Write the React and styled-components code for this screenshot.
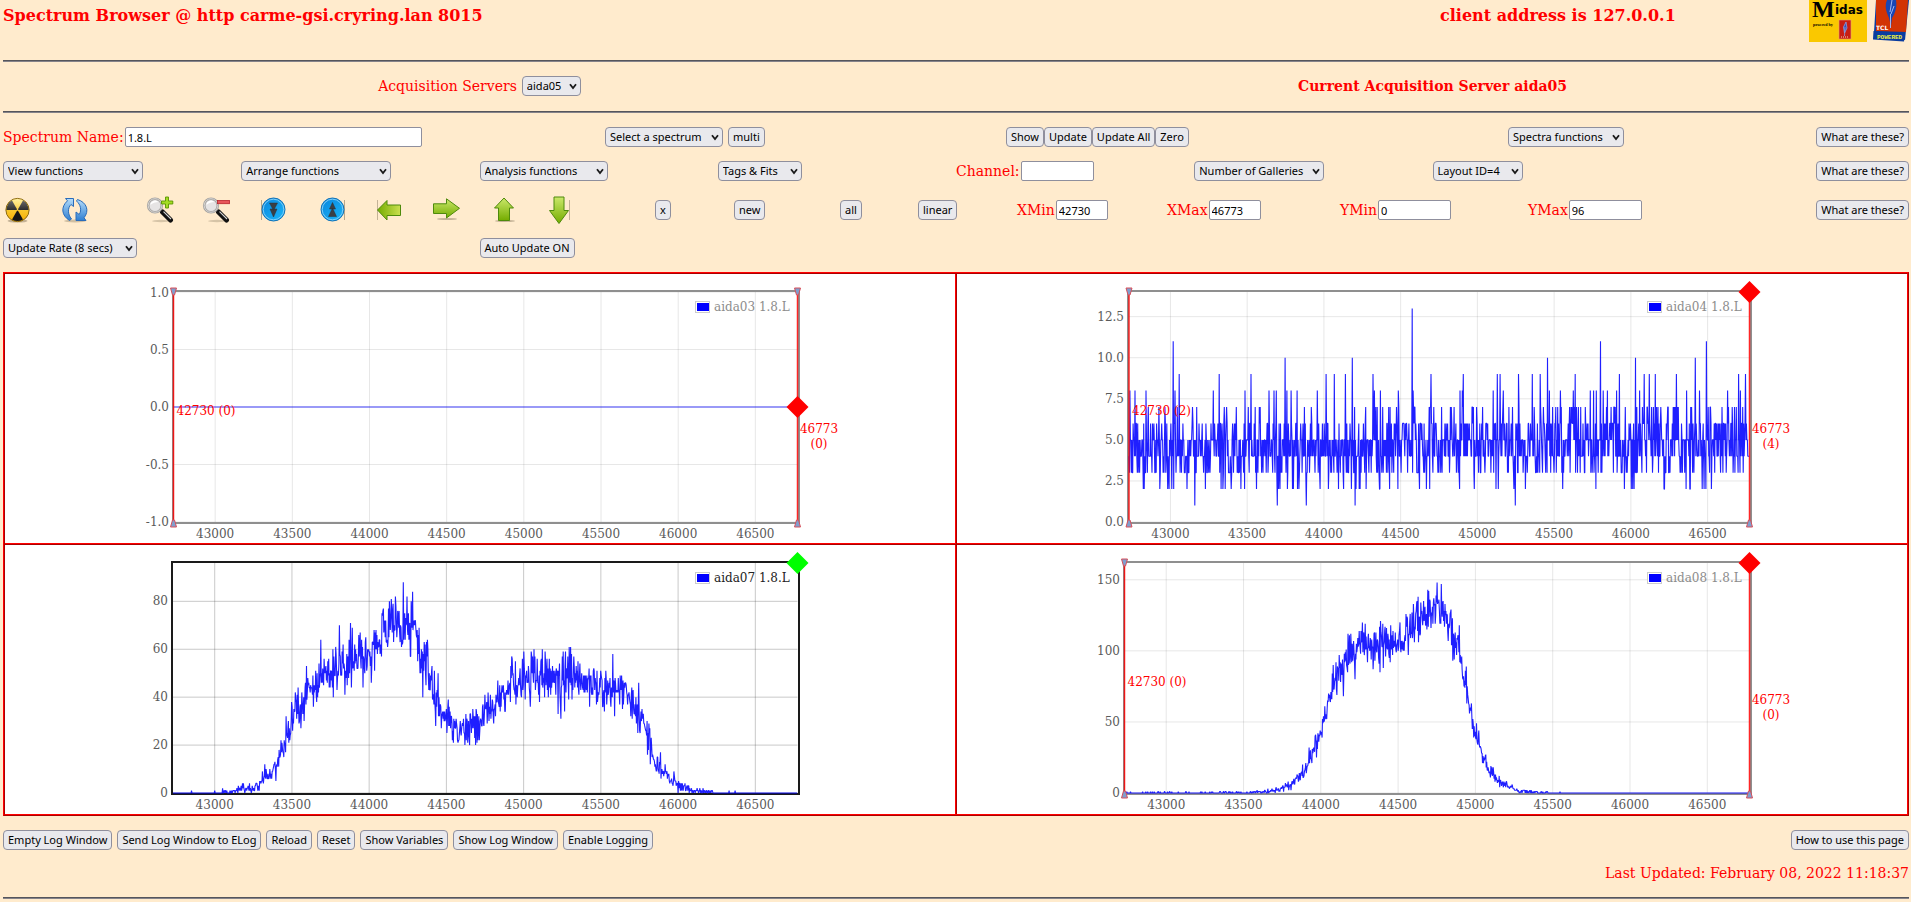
import React from "react";
import styled, { createGlobalStyle } from "styled-components";

const SERIF = '"DejaVu Serif", serif';
const UI = '"Noto Sans", "Open Sans", sans-serif';

const GlobalStyle = createGlobalStyle`
  *, *::before, *::after { box-sizing: border-box; }
  body {
    margin: 0 2px 0 3px;
    background: #ffebcd;
    color: #ff0000;
    font: 14px/16px ${SERIF};
  }
`;

/* ---------- layout parts ---------- */

const Page = styled.main`
  display: flex;
  flex-direction: column;
`;

const Rule = styled.hr`
  width: 100%;
  height: 2px;
  margin: 0;
  border: 0;
  border-top: 1px solid #55555b;
  background: #85838a;
`;

const Header = styled.header`
  display: grid;
  grid-template-columns: 1437fr 369fr 100fr;
  height: 60px;
`;

const Title = styled.h1`
  margin: 6px 0 0;
  font-size: 16px;
  line-height: 19px;
  font-weight: bold;
  white-space: nowrap;
`;

const Logos = styled.div`
  display: flex;
  align-items: flex-start;
  gap: 6px;
`;

const Servers = styled.section`
  display: grid;
  grid-template-columns: 1fr 1fr;
  align-items: center;
  justify-items: center;
  padding: 14px 0 15px;
`;

const CurrentServer = styled.h2`
  margin: 0;
  font-size: 14px;
  font-weight: bold;
`;

const Controls = styled.section`
  display: flex;
  flex-direction: column;
  gap: 14px;
  padding: 14px 0;
`;

const Row = styled.div`
  display: grid;
  grid-template-columns: ${(p) => p.$cols};
  align-items: center;
  padding-top: ${(p) => (p.$tall ? "1px" : "0")};
`;

const Group = styled.div`
  display: flex;
  align-items: center;
  gap: ${(p) => p.$gap || 0}px;
  justify-content: ${(p) => (p.$end ? "flex-end" : "flex-start")};
  white-space: nowrap;
`;

const Caption = styled.label`
  white-space: nowrap;
`;

/* ---------- controls ---------- */

const Button = styled.button`
  height: 20px;
  padding: 0 4px;
  border: 1px solid #8f8f9d;
  border-radius: 4px;
  background: #e9e9ed;
  color: #000;
  font: 11px/18px ${UI};
  white-space: nowrap;
  flex: none;
`;

const Input = styled.input`
  width: ${(p) => p.$w}px;
  height: 20px;
  padding: 0 2px;
  border: 1px solid #8f8f9d;
  border-radius: 2px;
  background: #fff;
  color: #000;
  font: 11px/18px ${UI};
`;

const SelectWrap = styled.span`
  position: relative;
  display: inline-flex;
  flex: none;
  justify-self: start;
`;

const Select = styled.select`
  appearance: none;
  width: ${(p) => p.$w}px;
  height: 20px;
  padding: 0 4px;
  border: 1px solid #8f8f9d;
  border-radius: 4px;
  background: #e9e9ed;
  color: #000;
  font: 11px/18px ${UI};
`;

const Chevron = styled.svg`
  position: absolute;
  right: 4px;
  top: 7px;
  pointer-events: none;
`;

const IconButton = styled.button`
  display: block;
  width: 28px;
  height: 28px;
  padding: 0;
  border: 0;
  background: none;
`;

function Dropdown({ id, label, w }) {
  return (
    <SelectWrap>
      <Select id={id} $w={w} aria-label={id ? undefined : label} defaultValue={label}>
        <option>{label}</option>
      </Select>
      <Chevron width="8" height="7" viewBox="0 0 8 7" aria-hidden="true">
        <path d="M1 1.2 L4 5 L7 1.2" fill="none" stroke="#1a1a1a" strokeWidth="1.8" />
      </Chevron>
    </SelectWrap>
  );
}

function Field({ id, label, value, w }) {
  return (
    <Group $gap={1}>
      <Caption htmlFor={id}>{label}</Caption>
      <Input id={id} $w={w} defaultValue={value} />
    </Group>
  );
}

const Help = () => (
  <Group $end>
    <Button>What are these?</Button>
  </Group>
);

/* ---------- icons ---------- */

const wedge = (a) => {
  const p = (r, d) => {
    const t = (d * Math.PI) / 180;
    return `${14.5 + r * Math.cos(t)} ${14 - r * Math.sin(t)}`;
  };
  return `M${p(1, a)} L${p(11, a)} A11 11 0 0 0 ${p(11, a + 60)} L${p(1, a + 60)}Z`;
};

const Radiation = () => (
  <svg width="28" height="28" viewBox="0 0 28 28">
    <defs>
      <linearGradient id="radFill" x1="0" y1="0" x2="0" y2="1">
        <stop offset="0" stopColor="#ffe45c" />
        <stop offset="1" stopColor="#f5ad00" />
      </linearGradient>
      <linearGradient id="radShine" x1="0" y1="0" x2="0" y2="1">
        <stop offset="0" stopColor="#fff" stopOpacity=".4" />
        <stop offset="1" stopColor="#fff" stopOpacity=".1" />
      </linearGradient>
    </defs>
    <ellipse cx="14.5" cy="25" rx="10" ry="1.6" fill="#8a7a60" opacity=".5" />
    <circle cx="14.5" cy="14" r="11.6" fill="url(#radFill)" stroke="#8c6a10" strokeWidth="1" />
    {[0, 120, 240].map((a) => (
      <path key={a} d={wedge(a)} fill="#161616" />
    ))}
    <path d="M3.5 14 A11 11 0 0 1 25.5 14Z" fill="url(#radShine)" />
  </svg>
);

const Refresh = () => (
  <svg width="28" height="28" viewBox="0 0 28 28">
    <defs>
      <linearGradient id="refFill" x1="0" y1="0" x2="0" y2="1">
        <stop offset="0" stopColor="#b4dcfa" />
        <stop offset="1" stopColor="#2f7fd2" />
      </linearGradient>
    </defs>
    <ellipse cx="15" cy="25" rx="11" ry="1.4" fill="#8a7a60" opacity=".4" />
    <path
      d="M5.5 2.5 H13.5 V10.5 L11 8.5 C7.5 12 7.5 18 11.5 23 L9.5 24.5 C1.5 19.5 0.5 11 7.5 4.8Z"
      fill="url(#refFill)" stroke="#2a6cba" strokeWidth="1" strokeLinejoin="round"
    />
    <path
      d="M17.5 3.5 C27 6.5 29.5 15 24 21.8 L26 24.5 H16 V16 L19.2 18.5 C22 14 20.5 8.5 16.5 5Z"
      fill="url(#refFill)" stroke="#2a6cba" strokeWidth="1" strokeLinejoin="round"
    />
  </svg>
);

const Magnifier = ({ minus }) => (
  <svg width="28" height="28" viewBox="0 0 28 28">
    <ellipse cx="15" cy="25" rx="9" ry="1.2" fill="#8a7a60" opacity=".35" />
    <path d="M16.5 16 L24.5 24" stroke="#111" strokeWidth="5" strokeLinecap="round" />
    <path d="M17.5 15.6 L25 23" stroke="#d8d8d8" strokeWidth="1.1" />
    <circle cx="9" cy="9.5" r="6.8" fill="#e6e4e4" stroke="#a6a4a2" strokeWidth="2.6" />
    <circle cx="9" cy="9.5" r="6.8" fill="none" stroke="#d5d3d0" strokeWidth="1" />
    <path d="M4.5 9 A4.6 4.6 0 0 1 12.5 6 C10 6 6 7 4.5 9Z" fill="#fff" />
    {minus ? (
      <rect x="15.5" y="4.5" width="12" height="3.2" fill="#e8565a" stroke="#b8242c" strokeWidth=".8" />
    ) : (
      <path
        d="M19.5 1 H22.5 V5 H26.8 V8 H22.5 V12 H19.5 V8 H15.5 V5 H19.5Z"
        fill="#a4dc24" stroke="#589400" strokeWidth=".9"
      />
    )}
  </svg>
);

const BlueDisc = ({ up }) => (
  <svg width="28" height="28" viewBox="0 0 28 28">
    <defs>
      <linearGradient id="discFill" x1="0" y1="0" x2="1" y2="1">
        <stop offset="0" stopColor="#0a84dc" />
        <stop offset="1" stopColor="#19b8fa" />
      </linearGradient>
    </defs>
    <path d={up ? "M26.5 4 V24" : "M2.5 4 V24"} stroke="#8a7a60" strokeWidth="1" opacity=".6" />
    <circle cx="14.5" cy="13.5" r="11.5" fill="url(#discFill)" stroke="#1672b4" strokeWidth="1" />
    <circle cx="14.5" cy="13.5" r="10.3" fill="none" stroke="#8ad4fa" strokeWidth=".9" />
    <path
      d={
        up
          ? "M14.5 6.5 L17.5 13 H11.5Z M14.5 12 L18.5 20.5 H10.5Z"
          : "M10.5 7 H18.5 L14.5 14.5Z M11 13 H18 L14.5 21Z"
      }
      fill="#3a3f44" stroke="#2b3238" strokeWidth=".5"
    />
  </svg>
);

const ARROWS = {
  left: "M2.5 14 L12 4.5 V9 H25.5 V19.5 H12 V24Z",
  right: "M1.5 7.8 H14.5 V2.8 L27.5 12.3 L14.5 22 V17.5 H1.5Z",
  up: "M14 2 L23.5 12 H19.5 V24.5 H8.5 V12 H4.5Z",
  down: "M9 1 H19 V14.5 H23.5 L14 27.5 L4.5 14.5 H9Z",
};

const Arrow = ({ dir }) => (
  <svg width="28" height="28" viewBox="0 0 28 28">
    <defs>
      <linearGradient id={`arrow-${dir}`} x1="0" y1="0" x2={dir === "left" ? "1" : "0"} y2={dir === "left" ? "0" : "1"}>
        <stop offset="0" stopColor={dir === "left" ? "#74ac00" : "#cbe86a"} />
        <stop offset="1" stopColor={dir === "left" ? "#cbe050" : "#74ac00"} />
      </linearGradient>
    </defs>
    {(dir === "left" || dir === "down") && (
      <path d={dir === "left" ? "M2.5 4 V24" : "M24.5 4 V24"} stroke="#8a7a60" strokeWidth="1" opacity=".5" />
    )}
    {(dir === "right" || dir === "up") && (
      <ellipse cx="15" cy={dir === "up" ? 25 : 23} rx="10" ry="1" fill="#8a7a60" opacity=".5" />
    )}
    <path d={ARROWS[dir]} fill={`url(#arrow-${dir})`} stroke="#4e8a0c" strokeWidth="1" strokeLinejoin="round" />
  </svg>
);

const ICONS = [
  ["Zero all", <Radiation />],
  ["Refresh", <Refresh />],
  ["Zoom in", <Magnifier />],
  ["Zoom out", <Magnifier minus />],
  ["Scale down", <BlueDisc />],
  ["Scale up", <BlueDisc up />],
  ["Left", <Arrow dir="left" />],
  ["Right", <Arrow dir="right" />],
  ["Up", <Arrow dir="up" />],
  ["Down", <Arrow dir="down" />],
];

const MidasLogo = () => (
  <svg width="58" height="42" viewBox="0 0 58 42" role="img" aria-label="Midas">
    <rect width="58" height="42" fill="#fac800" />
    <text x="3" y="17" fontFamily="Liberation Serif, serif" fontWeight="bold" fontSize="24" fill="#000">M</text>
    <text x="26" y="14" fontFamily="DejaVu Sans, sans-serif" fontWeight="bold" fontSize="12" fill="#000">idas</text>
    <text x="4" y="26" fontFamily="Liberation Serif, serif" fontWeight="bold" fontSize="4" fill="#000">powered by</text>
    <rect x="30" y="20" width="12" height="19" fill="#c81e14" stroke="#e8a070" strokeWidth=".6" />
    <path d="M37 22 L34.5 27 L35.5 33 L38 28Z M36 27 L35.5 36" fill="#3c50b4" stroke="#8ca0e0" strokeWidth=".8" />
    <path d="M32 37 H40" stroke="#f0d8c0" strokeWidth="1" strokeDasharray="1 1" />
  </svg>
);

const TclLogo = () => (
  <svg width="36" height="42" viewBox="0 0 36 42" role="img" aria-label="Tcl Powered">
    <path d="M3 0 L1 32 L32 40 L36 0Z" fill="#0a3ca0" />
    <path d="M3 0 H35 L33 32 L3 31Z" fill="#d23404" />
    <path d="M0.5 31 L32 33 L31 41.5 L0 39.5Z" fill="#0a3ca0" />
    <path d="M14 0 C11 7 14 13 16 18 L18 26 L19 18 C23 12 24 6 23 0Z" fill="#1846b4" />
    <path d="M19 0 L17 12 M21 6 L18 14 M17.5 14 V28" stroke="#a0b8f0" strokeWidth="1" fill="none" />
    <text x="3" y="30" fontFamily="DejaVu Sans, sans-serif" fontWeight="bold" fontSize="6" fill="#fff">TCL</text>
    <text x="4" y="39" fontFamily="Liberation Mono, monospace" fontWeight="bold" fontSize="6" fill="#f0f03c">POWERED</text>
  </svg>
);

/* ---------- spectra ---------- */

const FROM = 42730;
const TO = 46773;
const TOP = 18;
const BOTTOM = 248;
const RIGHT = 792.5;

function random(seed) {
  let s = seed;
  return () => {
    s = (s * 1664525 + 1013904223) % 4294967296;
    return s / 4294967296;
  };
}

const gauss = (rnd) =>
  Math.sqrt(-2 * Math.log(rnd() + 1e-9)) * Math.cos(2 * Math.PI * rnd());

function meanAt(env, ch) {
  if (ch <= env[0][0]) return env[0][1];
  for (let i = 1; i < env.length; i++) {
    if (ch <= env[i][0]) {
      const [a, va] = env[i - 1];
      const [b, vb] = env[i];
      return va + ((vb - va) * (ch - a)) / (b - a);
    }
  }
  return env[env.length - 1][1];
}

function buildSpectrum({ seed, env, sd, min = 0, max = Infinity, peaks = [], step = 3 }) {
  const rnd = random(seed);
  const out = [];
  for (let ch = FROM; ch <= TO; ch += step) {
    const m = meanAt(env, ch);
    out.push([ch, Math.min(max, Math.max(min, Math.round(m + gauss(rnd) * sd(m))))]);
  }
  peaks.forEach(([ch, v]) => {
    const i = Math.round((ch - FROM) / step);
    if (out[i]) out[i][1] = v;
  });
  return out;
}

/* peaks of the flat background spectrum, as distance in pixels from the left edge */
const at = (px) => FROM + (px * (TO - FROM)) / 620;
const NOISE_PEAKS = [
  ...[[44, 11], [50, 9], [90, 9], [122, 9], [156, 10], [197, 9], [205, 9], [216, 9], [223, 10],
    [244, 9], [283, 13], [302, 9], [334, 9], [368, 9], [371, 9], [389, 9], [403, 9], [411, 9],
    [418, 10], [446, 9], [471, 11], [490, 9], [506, 10], [515, 9], [520, 9], [526, 9], [547, 9],
    [566, 10], [577, 11], [609, 9], [616, 9], [66, 1], [148, 1], [177, 1], [226, 1], [386, 1], [557, 1]],
  ...[1, 6, 17, 46, 84, 116, 140, 145, 147, 158, 162, 168, 188, 245, 251, 269, 284, 331, 333, 364,
    374, 420, 431, 444, 461, 464, 467, 474, 478, 487, 510, 557, 570, 598, 611].map((x) => [x, 8]),
].map(([px, v]) => [at(px), v]);

const noise = buildSpectrum({
  seed: 77,
  step: 3,
  env: [[42730, 4.3], [44200, 4.3], [44700, 4.7], [46773, 4.8]],
  sd: () => 1.3,
  min: 2,
  max: 7,
  peaks: NOISE_PEAKS,
});

const doublePeak = buildSpectrum({
  seed: 421,
  env: [[42730, 0], [43000, 0], [43100, 0.3], [43200, 1.5], [43280, 3], [43350, 7], [43400, 12],
    [43450, 20], [43500, 31], [43550, 37], [43600, 42], [43650, 45], [43700, 50], [43800, 52],
    [43900, 57], [44000, 58], [44050, 63], [44100, 67], [44150, 71], [44250, 72], [44290, 71],
    [44320, 62], [44370, 53], [44420, 41], [44480, 33], [44540, 29], [44600, 26], [44650, 28],
    [44700, 30], [44800, 36], [44850, 40], [44900, 45], [44950, 47], [45000, 49], [45100, 48],
    [45200, 47], [45300, 46], [45400, 46], [45500, 44], [45600, 45], [45650, 44], [45700, 38],
    [45750, 32], [45800, 22], [45850, 15], [45900, 9], [45950, 6], [46000, 3.5], [46050, 2],
    [46100, 1.2], [46200, 0.4], [46260, 0], [46773, 0]],
  sd: (m) => 0.74 * Math.sqrt(m),
  peaks: [[44221, 88], [44281, 84], [44142, 81], [44130, 80], [43808, 70], [43688, 64], [43878, 71],
    [44376, 64], [45304, 61], [45576, 58], [45270, 59], [45120, 60], [45066, 60], [45000, 59],
    [44926, 56], [45240, 31], [45588, 32], [43844, 41], [44650, 20], [44690, 20], [43324, 12],
    [43594, 53], [42850, 1], [43000, 1], [43050, 2], [46330, 1], [46370, 1]],
});

const singlePeak = buildSpectrum({
  seed: 913,
  env: [[42730, 0.15], [43500, 0.2], [43650, 1], [43750, 3], [43800, 6], [43850, 10], [43900, 17],
    [43950, 28], [44000, 44], [44050, 62], [44100, 80], [44150, 92], [44200, 99], [44250, 102],
    [44350, 103], [44400, 105], [44500, 107], [44550, 112], [44600, 117], [44650, 120],
    [44700, 127], [44750, 131], [44800, 127], [44850, 115], [44880, 104], [44920, 85], [44960, 62],
    [45000, 40], [45050, 25], [45100, 14], [45150, 8], [45200, 4.5], [45250, 2.5], [45300, 1.5],
    [45400, 0.4], [45500, 0.15], [45600, 0], [46773, 0]],
  sd: (m) => 0.74 * Math.sqrt(m),
  peaks: [[44752, 148], [44780, 147], [44697, 142], [44895, 118], [44383, 85], [44288, 119],
    [44386, 121], [44220, 80], [44184, 111], [44620, 134], [44600, 133]],
});

const X_TICKS = [43000, 43500, 44000, 44500, 45000, 45500, 46000, 46500];

const CHARTS = [
  { name: "aida03 1.8.L", x0: 168.5, min: -1, max: 1, ticks: ["1.0", "0.5", "0.0", "-0.5", "-1.0"],
    data: [[FROM, 0], [TO, 0]], flat: true, left: "42730 (0)", right: "(0)", status: ["red", 0] },
  { name: "aida04 1.8.L", x0: 172, min: 0, max: 14, ticks: ["12.5", "10.0", "7.5", "5.0", "2.5", "0.0"],
    data: noise, left: "42730 (2)", right: "(4)", status: ["red", 14] },
  { name: "aida07 1.8.L", x0: 168, min: 0, max: 96, ticks: ["80", "60", "40", "20", "0"],
    data: doublePeak, active: true, status: ["#00ff00", 96] },
  { name: "aida08 1.8.L", x0: 167.5, min: 0, max: 161.8, ticks: ["150", "100", "50", "0"],
    data: singlePeak, left: "42730 (0)", right: "(0)", status: ["red", 161.8] },
];

const Gallery = styled.section`
  display: grid;
  grid-template-columns: 952fr 950fr;
  border: 2px ridge #ff0000;
  background: #fff;
`;

const Cell = styled.figure`
  margin: 0;
  border: 0 ridge #ff0000;
  border-right-width: ${(p) => (p.$right ? "2px" : "0")};
  border-bottom-width: ${(p) => (p.$bottom ? "2px" : "0")};
`;

const Plot = styled.svg`
  display: block;
  width: 100%;
  height: auto;
  font: 12px ${SERIF};
`;

function Chart({ spec }) {
  const { x0, min, max, active } = spec;
  const px = (ch) => x0 + ((ch - FROM) * (RIGHT - x0)) / (TO - FROM);
  const py = (v) => BOTTOM - ((v - min) * (BOTTOM - TOP)) / (max - min);
  const points = spec.data.map(([c, v]) => `${px(c).toFixed(1)},${py(v).toFixed(1)}`).join(" ");
  const frame = active ? "#1a1a1a" : "#8f8f8f";
  const grid = active ? "rgba(60,60,60,.28)" : "rgba(60,60,60,.12)";
  const frameLeft = Math.floor(x0 - 0.5);
  const [colour, level] = spec.status;
  const marker = { fill: "#7f9fcf", stroke: "#d8505a", strokeWidth: 1 };
  return (
    <Plot viewBox="0 0 950 269" role="img" aria-label={spec.name}>
      {X_TICKS.map((t) => (
        <g key={t}>
          <line x1={px(t)} x2={px(t)} y1={TOP} y2={BOTTOM} stroke={grid} />
          <text x={px(t)} y="264" textAnchor="middle" fill="#5a5a5a">{t}</text>
        </g>
      ))}
      {spec.ticks.map((t) => (
        <g key={t}>
          <line x1={x0} x2={RIGHT} y1={py(+t)} y2={py(+t)} stroke={grid} />
          <text x={frameLeft - 4} y={Math.max(23, py(+t) + 4)} textAnchor="end" fill="#5a5a5a">{t}</text>
        </g>
      ))}
      <rect x={frameLeft} y="17" width={794 - frameLeft} height="232" fill="none" stroke={frame} strokeWidth="2" />
      <polyline
        points={points} fill="none" stroke="#0000ff" strokeLinejoin="bevel"
        strokeOpacity={spec.flat ? 0.37 : 0.88} strokeWidth={spec.flat ? 2 : 1.1}
      />
      <rect x="690.5" y="27.5" width="14" height="11" fill="#fff" stroke="#ccc" />
      <rect x="692" y="29" width="12" height="8" fill="#0000ff" />
      <text x="709" y="37" fill={active ? "#222" : "#8c8c8c"}>{spec.name}</text>
      {spec.left && (
        <g>
          {[x0, RIGHT].map((x) => (
            <g key={x}>
              <line x1={x} x2={x} y1="16" y2="250" stroke="#ff0000" strokeOpacity=".85" strokeWidth="1.5" />
              <path d={`M${x - 3} 14 h6 l-2 7 h-2Z`} {...marker} />
              <path d={`M${x - 1} 246 h2 l2 7 h-6Z`} {...marker} />
            </g>
          ))}
          <text x={x0 + 3} y="141" fill="#ff0000">{spec.left}</text>
          <text x="814" y="159" textAnchor="middle" fill="#ff0000">46773</text>
          <text x="814" y="174" textAnchor="middle" fill="#ff0000">{spec.right}</text>
        </g>
      )}
      <path d={`M${RIGHT} ${py(level) - 11} l11 11 l-11 11 l-11 -11Z`} fill={colour} />
    </Plot>
  );
}

/* ---------- footer ---------- */

const Footer = styled.footer`
  display: flex;
  flex-direction: column;
  padding-bottom: 3px;
`;

const FooterBar = styled.div`
  display: flex;
  justify-content: space-between;
  padding: 14px 0 15px;
`;

const Updated = styled.p`
  margin: 0 0 16px;
  text-align: right;
`;

const LOG_BUTTONS = [
  "Empty Log Window", "Send Log Window to ELog", "Reload", "Reset",
  "Show Variables", "Show Log Window", "Enable Logging",
];

export default function App() {
  return (
    <Page>
      <GlobalStyle />
      <Header>
        <Title>Spectrum Browser @ http carme-gsi.cryring.lan 8015</Title>
        <Title as="p">client address is 127.0.0.1</Title>
        <Logos>
          <MidasLogo />
          <TclLogo />
        </Logos>
      </Header>
      <Rule />
      <Servers>
        <Group $gap={5}>
          <Caption htmlFor="server">Acquisition Servers</Caption>
          <Dropdown id="server" label="aida05" w={59} />
        </Group>
        <CurrentServer>Current Acquisition Server aida05</CurrentServer>
      </Servers>
      <Rule />
      <Controls>
        <Row $cols="602fr 401fr 502fr 306fr 95fr">
          <Field id="spectrum" label="Spectrum Name:" value="1.8.L" w={297} />
          <Group $gap={5}>
            <Dropdown label="Select a spectrum" w={118} />
            <Button>multi</Button>
          </Group>
          <Group>
            <Button>Show</Button>
            <Button>Update</Button>
            <Button>Update All</Button>
            <Button>Zero</Button>
          </Group>
          <Dropdown label="Spectra functions" w={116} />
          <Help />
        </Row>
        <Row $cols="repeat(8, 1fr)">
          <Dropdown label="View functions" w={140} />
          <Dropdown label="Arrange functions" w={150} />
          <Dropdown label="Analysis functions" w={128} />
          <Dropdown label="Tags &amp; Fits" w={84} />
          <Field id="channel" label="Channel:" value="" w={73} />
          <Dropdown label="Number of Galleries" w={130} />
          <Dropdown label="Layout ID=4" w={90} />
          <Help />
        </Row>
        <Row $tall $cols="57fr 86fr 56fr 57fr 59fr 57fr 57fr 58fr 55fr 110fr 79fr 106fr 78fr 99fr 150fr 173fr 188fr 286fr 95fr">
          {ICONS.map(([name, icon]) => (
            <IconButton key={name} aria-label={name}>{icon}</IconButton>
          ))}
          <Group><Button>x</Button></Group>
          <Group><Button>new</Button></Group>
          <Group><Button>all</Button></Group>
          <Group><Button>linear</Button></Group>
          <Field id="xmin" label="XMin" value="42730" w={52} />
          <Field id="xmax" label="XMax" value="46773" w={52} />
          <Field id="ymin" label="YMin" value="0" w={73} />
          <Field id="ymax" label="YMax" value="96" w={73} />
          <Help />
        </Row>
        <Row $cols="repeat(4, 1fr)">
          <Dropdown label="Update Rate (8 secs)" w={134} />
          <Group><Button>Auto Update ON</Button></Group>
        </Row>
      </Controls>
      <Gallery>
        {CHARTS.map((spec, i) => (
          <Cell key={spec.name} $right={i % 2 === 0} $bottom={i < 2}>
            <Chart spec={spec} />
          </Cell>
        ))}
      </Gallery>
      <Footer>
        <FooterBar>
          <Group $gap={5}>
            {LOG_BUTTONS.map((label) => (
              <Button key={label}>{label}</Button>
            ))}
          </Group>
          <Button>How to use this page</Button>
        </FooterBar>
        <Updated>Last Updated: February 08, 2022 11:18:37</Updated>
        <Rule />
      </Footer>
    </Page>
  );
}
